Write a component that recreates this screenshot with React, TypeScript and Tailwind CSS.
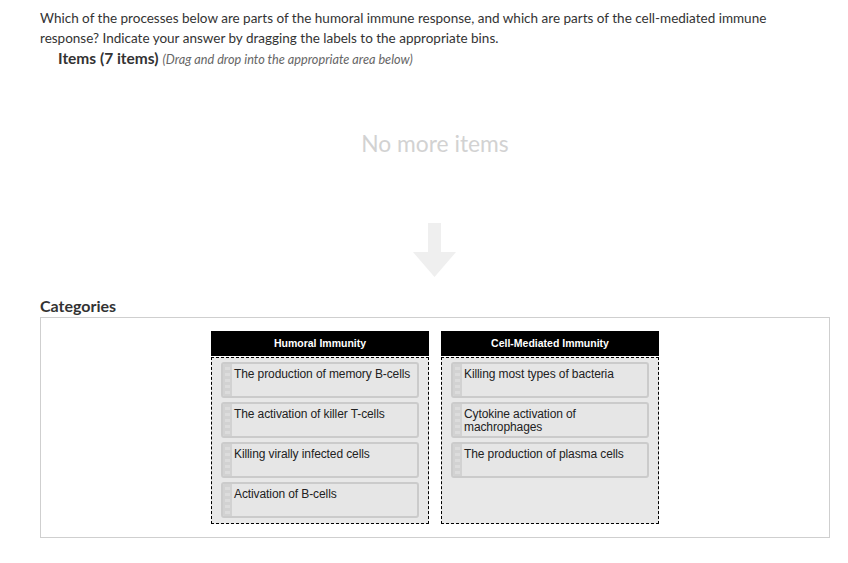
const humoral = [
  "The production of memory B-cells",
  "The activation of killer T-cells",
  "Killing virally infected cells",
  "Activation of B-cells",
];

const cellMediated = [
  "Killing most types of bacteria",
  "Cytokine activation of machrophages",
  "The production of plasma cells",
];

function Grip() {
  return (
    <div className="flex w-[9px] shrink-0 flex-col items-center gap-[3px] bg-[#d2d2d2] pt-[3px]">
      {[0, 1, 2, 3, 4].map((i) => (
        <div key={i} className="h-[3px] w-[5px] bg-[#dcdcdc]" />
      ))}
    </div>
  );
}

function Card({ label }: { label: string }) {
  return (
    <div className="flex h-[36px] overflow-hidden rounded-[3px] border-2 border-[#cbcbcb] bg-[#e6e6e6]">
      <Grip />
      <div className="pl-[2px] pt-[4px] font-['Liberation_Sans',Arial,sans-serif] text-[12px] leading-[13px] tracking-[-0.1px] text-[#222]">
        {label}
      </div>
    </div>
  );
}

function Bin({ title, items }: { title: string; items: string[] }) {
  return (
    <div className="flex w-[218px] flex-col">
      <div className="flex h-[25px] items-center justify-center bg-black font-['Liberation_Sans',Arial,sans-serif] text-[10.5px] font-bold text-white">
        {title}
      </div>
      <div className="mt-[1px] flex h-[167px] flex-col gap-[4px] border border-dashed border-black bg-[#e8e8e8] px-[9px] pt-[4px]">
        {items.map((item) => (
          <Card key={item} label={item} />
        ))}
      </div>
    </div>
  );
}

export default function App() {
  return (
    <div className="min-h-screen bg-white pt-2 font-['Lato','Open_Sans',sans-serif] text-[#333]">
      <p className="pl-10 pr-[50px] text-[13.5px] leading-5">
        Which of the processes below are parts of the humoral immune response, and which are
        parts of the cell-mediated immune response? Indicate your answer by dragging the labels
        to the appropriate bins.
      </p>
      <div className="pl-[58px] text-[15.5px] leading-5">
        <span className="font-bold">Items (7 items)</span>{" "}
        <span className="text-[12.7px] italic text-[#666]">(Drag and drop into the appropriate area below)</span>
      </div>

      <div className="mt-[60px] flex flex-col items-center pl-[22px]">
        <div className="text-[22.8px] leading-7 text-[#d2d2d2]">No more items</div>
        <svg className="mt-[66px]" width="44" height="55" viewBox="0 0 44 55">
          <path d="M15 0 H28 V29 H43 L21.5 54 L0 29 H15 Z" fill="#efefef" />
        </svg>
      </div>

      <h2 className="mt-[18px] pl-10 text-[16px] font-bold leading-5">Categories</h2>
      <div className="ml-10 mt-[1px] flex w-[790px] justify-center gap-3 border border-[#cfcfcf] py-[13px]">
        <Bin title="Humoral Immunity" items={humoral} />
        <Bin title="Cell-Mediated Immunity" items={cellMediated} />
      </div>
    </div>
  );
}
